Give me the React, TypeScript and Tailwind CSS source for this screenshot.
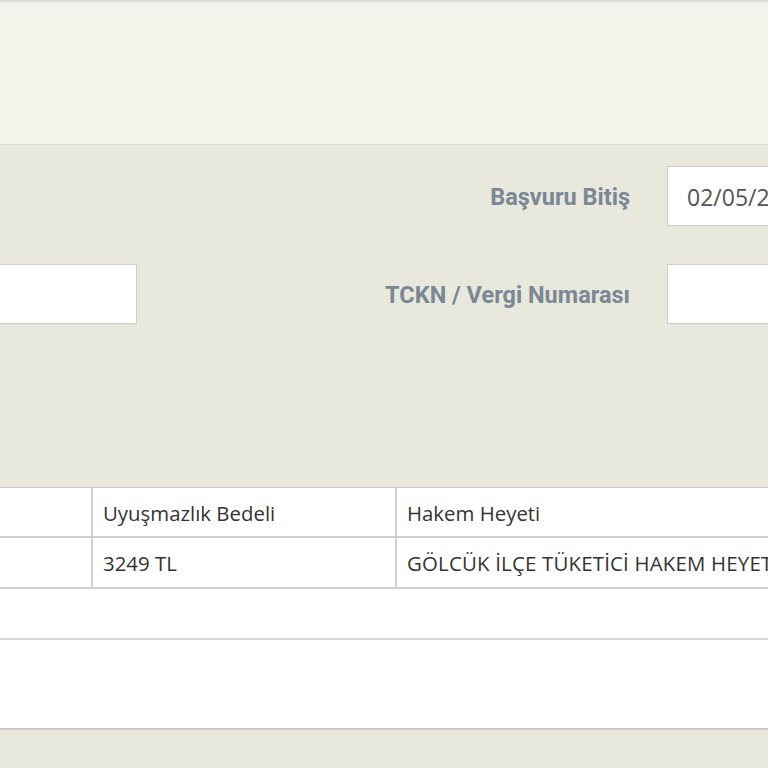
export default function App() {
  return (
    <div className="w-[768px] h-[768px] overflow-hidden bg-[#e8e8dc] font-['Open_Sans',sans-serif]">
      {/* top strip */}
      <div className="h-[145px] border-t-2 border-[#dcdcd4] border-b border-b-[#dcdcd0] bg-[linear-gradient(#f0efea_0px,#f5f4ef_4px,#f1f0ea_8px,#f4f3ed_12px,#f4f4ec_16px)]" />

      {/* search form */}
      <div className="flex flex-col gap-[38px] pt-[21px] h-[342px]">
        <div className="flex items-center h-[60px]">
          <div className="w-[137px] shrink-0" />
          <label className="w-[530px] shrink-0 text-right pr-[37px] pt-[3px] font-['Roboto',sans-serif] font-bold text-[23.5px] text-[#7a8795]">
            Başvuru Bitiş
          </label>
          <div className="w-[200px] shrink-0 h-[60px] bg-white border border-[#cfcfc8] pl-[19px] pt-[2px] flex items-center text-[23px] text-[#555]">
            02/05/2018
          </div>
        </div>
        <div className="flex items-center h-[60px]">
          <div className="w-[139px] -ml-[2px] shrink-0 h-[60px] bg-white border border-[#cfcfc8]" />
          <label className="w-[530px] shrink-0 text-right pr-[37px] pt-[3px] font-['Roboto',sans-serif] font-bold text-[23.5px] text-[#7a8795] whitespace-nowrap">
            TCKN / Vergi Numarası
          </label>
          <div className="w-[200px] shrink-0 h-[60px] bg-white border border-[#cfcfc8]" />
        </div>
      </div>

      {/* results table */}
      <div className="bg-white border-t border-[#c8c8c4] h-[243px] border-b-2 border-b-[#cac8c4]">
        <div className="grid grid-cols-[91px_304px_1fr] h-[50px] border-b-2 border-[#d0d0d0] text-[20.4px] text-[#333]">
          <div />
          <div className="border-l-2 border-[#d0d0d0] pl-[10px] pt-[3px] flex items-center">Uyuşmazlık Bedeli</div>
          <div className="border-l-2 border-[#d0d0d0] pl-[10px] pt-[3px] flex items-center whitespace-nowrap">Hakem Heyeti</div>
        </div>
        <div className="grid grid-cols-[91px_304px_1fr] h-[51px] border-b-2 border-[#d0d0d0] text-[20.4px] text-[#333]">
          <div />
          <div className="border-l-2 border-[#d0d0d0] pl-[10px] pt-[2px] flex items-center">3249 TL</div>
          <div className="border-l-2 border-[#d0d0d0] pl-[10px] pt-[2px] flex items-center whitespace-nowrap tracking-[0.2px]">GÖLCÜK İLÇE TÜKETİCİ HAKEM HEYETİ</div>
        </div>
        <div className="h-[51px] border-b-2 border-[#d8d8d8]" />
      </div>
    </div>
  );
}
